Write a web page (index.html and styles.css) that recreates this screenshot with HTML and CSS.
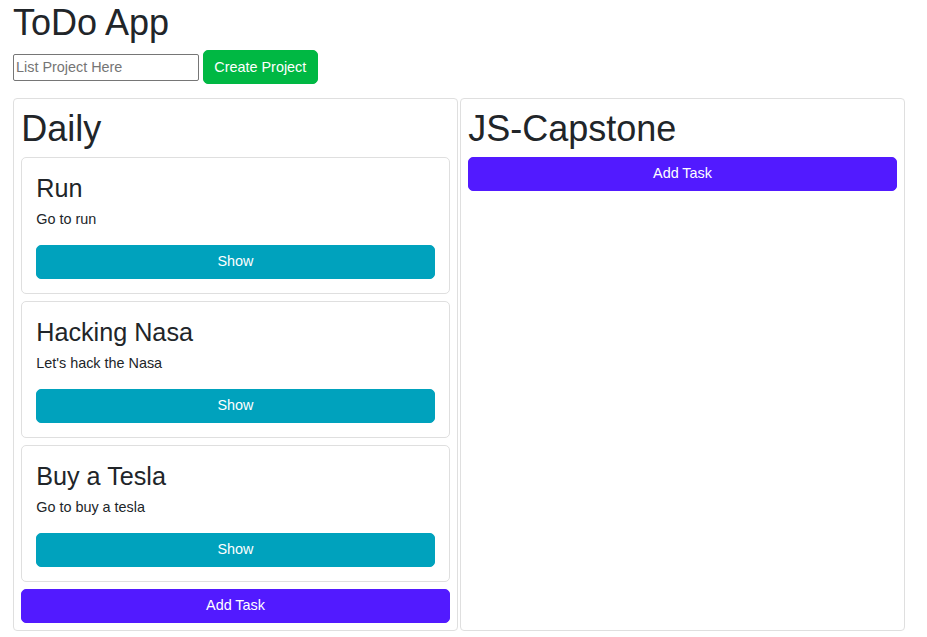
FILE: index.html
```html
<!DOCTYPE html>
<html lang="en">
<head>
<meta charset="utf-8">
<title>ToDo App</title>
<link rel="stylesheet" href="styles.css">
</head>
<body>
<div class="app">
  <h1 class="app-title">ToDo App</h1>
  <form class="project-form">
    <input class="project-input" type="text" placeholder="List Project Here">
    <button type="button" class="btn btn-create">Create Project</button>
  </form>
  <div class="board">
    <section class="project">
      <h1 class="project-title">Daily</h1>
      <div class="task">
        <h3 class="task-title">Run</h3>
        <p class="task-desc">Go to run</p>
        <button type="button" class="btn btn-show">Show</button>
      </div>
      <div class="task">
        <h3 class="task-title">Hacking Nasa</h3>
        <p class="task-desc">Let's hack the Nasa</p>
        <button type="button" class="btn btn-show">Show</button>
      </div>
      <div class="task">
        <h3 class="task-title">Buy a Tesla</h3>
        <p class="task-desc">Go to buy a tesla</p>
        <button type="button" class="btn btn-show">Show</button>
      </div>
      <button type="button" class="btn btn-add">Add Task</button>
    </section>
    <section class="project">
      <h1 class="project-title">JS-Capstone</h1>
      <button type="button" class="btn btn-add">Add Task</button>
    </section>
  </div>
</div>
</body>
</html>
```

FILE: styles.css
```css
* {
  box-sizing: border-box;
}

body {
  margin: 0;
  font-family: "Liberation Sans", Arial, sans-serif;
  font-size: 14.4px;
  line-height: 1.5;
  color: #212529;
  background: #fff;
}

.app {
  padding: 1px 0 0 13px;
}

.app-title {
  font-size: 36px;
  font-weight: 400;
  line-height: 1.2;
  margin: 0 0 6.2px;
}

.project-form {
  display: flex;
  align-items: center;
  gap: 4px;
  margin: 0;
}

.project-input {
  width: 186px;
  height: 27px;
  padding: 1px 2px;
  border: 1px solid #767676;
  border-radius: 2px;
  font-family: inherit;
  font-size: 14.4px;
  line-height: 23px;
  color: #212529;
}

.project-input::placeholder {
  color: #757575;
}

.btn {
  display: block;
  height: 33.6px;
  padding: 0 10.3px;
  border: 1px solid transparent;
  border-radius: 5px;
  font-family: inherit;
  font-size: 14.4px;
  line-height: 31.6px;
  color: #fff;
  text-align: center;
  cursor: pointer;
}

.btn-create {
  height: 34px;
  line-height: 32px;
  background: #00b843;
  border-color: #00b843;
}

.board {
  display: flex;
  gap: 2px;
  margin-top: 14px;
}

.project {
  width: 445px;
  min-height: 533px;
  padding: 7.2px;
  border: 1px solid #dfdfdf;
  border-radius: 4px;
}

.project-title {
  font-size: 36px;
  font-weight: 400;
  line-height: 1.2;
  margin: 0 0 7.6px;
}

.task {
  padding: 14.4px 14px;
  margin-bottom: 7.4px;
  border: 1px solid #dfdfdf;
  border-radius: 5px;
}

.task-title {
  font-size: 25.2px;
  font-weight: 400;
  line-height: 1.2;
  margin: 0 0 6px;
}

.task-desc {
  margin: 0 0 14.4px;
}

.btn-show {
  width: 100%;
  background: #00a2bd;
  border-color: #00a2bd;
}

.btn-add {
  width: 100%;
  background: #521aff;
  border-color: #521aff;
}
```
